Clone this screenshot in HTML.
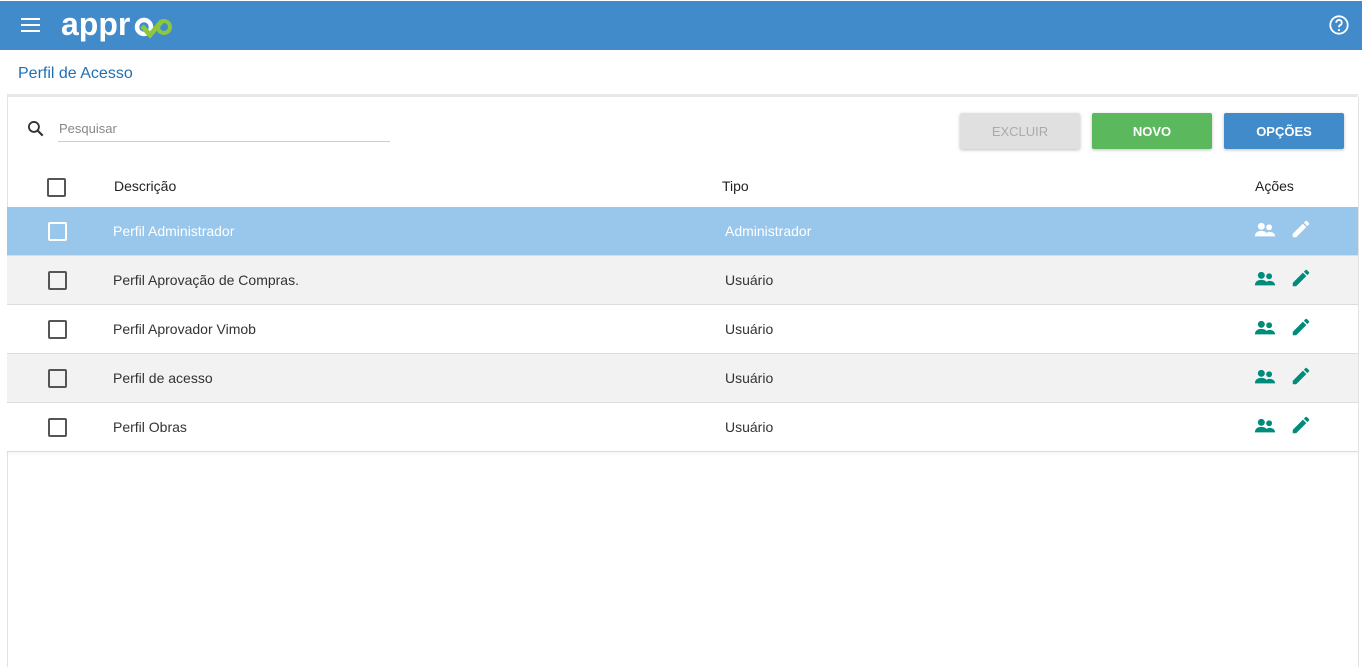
<html><head><style>
body{margin:0;width:1362px;height:658px;background:#fff;font-family:"Liberation Sans",sans-serif;position:relative;overflow:hidden}
.top{position:absolute;left:0;top:1px;width:1362px;height:49px;background:#418bca}
.abs{position:absolute}
.btn{position:absolute;top:113px;width:120px;height:36px;border-radius:2px;font-size:13px;font-weight:bold;display:flex;align-items:center;justify-content:center;color:#fff;box-shadow:0 1px 3px rgba(0,0,0,.25)}
.cb{position:absolute;left:48px;width:15px;height:15px;border:2px solid #555;border-radius:2px}
.row{position:absolute;left:7px;width:1351px;height:48px;border-bottom:1px solid #ddd;font-size:14px;color:#333}
.row span{position:absolute;top:16px}
</style></head><body>
<div class="top"></div>
<div class="abs" style="left:21px;top:18px;width:19px;height:2px;background:#fff;box-shadow:0 6px 0 #fff,0 12px 0 #fff"></div>
<div class="abs" style="left:61px;top:6px;color:#fff;font-size:32px;font-weight:bold;letter-spacing:0px">appr</div>
<svg class="abs" style="left:134px;top:14px" width="40" height="26"><circle cx="10" cy="13" r="7" stroke="#fff" stroke-width="4.5" fill="none"/><path d="M8 12 L16 21 L28 7" stroke="#8dc63f" stroke-width="5" fill="none"/><circle cx="30" cy="13" r="6" stroke="#8dc63f" stroke-width="4" fill="none"/></svg>
<svg class="abs" style="left:1328px;top:14px" width="22" height="22" viewBox="0 0 24 24"><circle cx="12" cy="12" r="9.5" stroke="#fff" stroke-width="2" fill="none"/><path d="M9 9.5a3 3 0 1 1 4 2.8c-.7.4-1 1-1 1.7v.5" stroke="#fff" stroke-width="2" fill="none"/><circle cx="12" cy="17.5" r="1.2" fill="#fff"/></svg>
<div class="abs" style="left:18px;top:65px;font-size:16px;color:#1f6fb6">Perfil de Acesso</div>
<div class="abs" style="left:7px;top:94px;width:1351px;height:3px;background:#e8e8e8"></div>
<div class="abs" style="left:7px;top:97px;width:1350px;height:570px;border-left:1px solid #e3e3e3;border-right:1px solid #e3e3e3"></div>
<svg class="abs" style="left:26px;top:119px" width="20" height="20" viewBox="0 0 24 24"><circle cx="9.5" cy="9.5" r="6" stroke="#333" stroke-width="2.2" fill="none"/><path d="M14 14l6 6" stroke="#333" stroke-width="2.6"/></svg>
<div class="abs" style="left:59px;top:121px;font-size:13px;color:#888">Pesquisar</div>
<div class="abs" style="left:58px;top:141px;width:332px;height:1px;background:#ccc"></div>
<div class="btn" style="left:960px;background:#e0e0e0;color:#aaa;font-weight:normal">EXCLUIR</div>
<div class="btn" style="left:1092px;background:#5cb85c">NOVO</div>
<div class="btn" style="left:1224px;background:#418bca">OPÇÕES</div>
<div class="cb" style="top:178px;left:47px"></div>
<div class="abs" style="left:114px;top:178px;font-size:14px;color:#222">Descrição</div>
<div class="abs" style="left:722px;top:178px;font-size:14px;color:#222">Tipo</div>
<div class="abs" style="left:1255px;top:178px;font-size:14px;color:#222">Ações</div>
<div id="rows"></div>
<script>
var d=[["Perfil Administrador","Administrador"],["Perfil Aprovação de Compras.","Usuário"],["Perfil Aprovador Vimob","Usuário"],["Perfil de acesso","Usuário"],["Perfil Obras","Usuário"]],h="";
d.forEach(function(r,i){var t=207+i*49,hl=i==0,bg=hl?"#99c7ec":(i%2?"#f2f2f2":"#fff"),c=hl?"#fff":"#008c7a",tc=hl?"#fff":"#333";
h+='<div class="row" style="top:'+t+'px;background:'+bg+';color:'+tc+'"><span style="left:106px">'+r[0]+'</span><span style="left:718px">'+r[1]+'</span></div>';
h+='<div class="cb" style="top:'+(t+15)+'px;border-color:'+(hl?"#fff":"#555")+'"></div>';
h+='<svg class="abs" style="left:1253px;top:'+(t+12)+'px" width="24" height="22" viewBox="0 0 24 24"><circle cx="8" cy="8" r="3.8" fill="'+c+'"/><circle cx="16.5" cy="9" r="3.2" fill="'+c+'"/><path d="M1 19c0-4 3-6 7-6s7 2 7 6z M13 19c0-3 1-5 3.5-5s6.5 1 6.5 5z" fill="'+c+'"/></svg>';
h+='<svg class="abs" style="left:1290px;top:'+(t+11)+'px" width="22" height="22" viewBox="0 0 24 24"><path d="M3 17.25V21h3.75L17.81 9.94l-3.75-3.75L3 17.25zM20.71 7.04a1 1 0 0 0 0-1.41l-2.34-2.34a1 1 0 0 0-1.41 0l-1.83 1.83 3.75 3.75 1.83-1.83z" fill="'+c+'"/></svg>';});
h+='<div class="abs" style="left:7px;top:451px;width:1351px;height:1px;box-shadow:0 1px 3px rgba(0,0,0,.12)"></div>';
document.getElementById("rows").innerHTML=h;
</script>
</body></html>
